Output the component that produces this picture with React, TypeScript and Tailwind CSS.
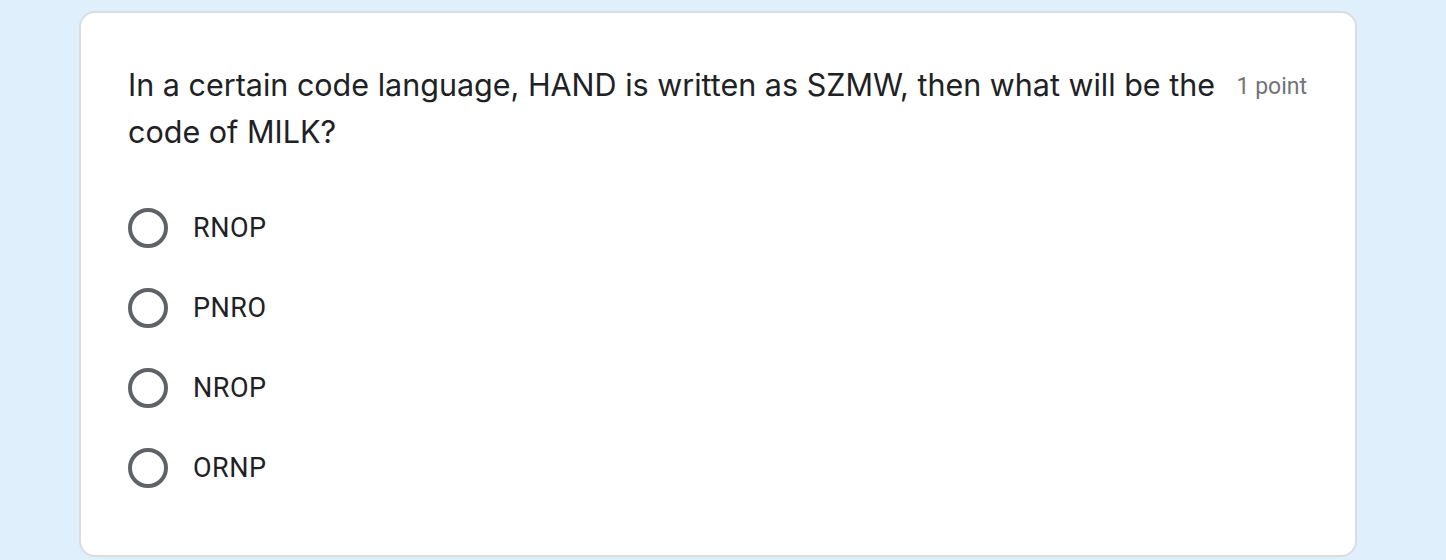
const options = ["RNOP", "PNRO", "NROP", "ORNP"];

export default function App() {
  return (
    <div className="min-h-[560px] w-full bg-[#e0effc] pl-[79px] pt-[11px]">
      <div className="h-[546px] w-[1278px] rounded-[16px] border-2 border-[#dadce0] bg-white pl-[47px] pr-[48px] pt-[48px]">
        <div className="flex items-start justify-between gap-4">
          <div
            className="flex-1 text-[30.5px] leading-[47px] text-[#202124]"
            style={{ fontFamily: "Inter, 'Open Sans', sans-serif" }}
          >
            In a certain code language, HAND is written as SZMW, then what will be the code of MILK?
          </div>
          <div
            className="pt-[8px] text-[23px] leading-[36px] text-[#70757a] whitespace-nowrap"
            style={{ fontFamily: "Roboto, sans-serif" }}
          >
            1 point
          </div>
        </div>
        <div className="mt-[33px] flex flex-col">
          {options.map((o) => (
            <div key={o} className="flex h-[80px] items-center gap-[25px]">
              <div className="h-[40px] w-[40px] rounded-full border-[4px] border-[#5f6368]" />
              <span
                className="text-[27px] tracking-[0.5px] text-[#202124]"
                style={{ fontFamily: "Roboto, sans-serif" }}
              >
                {o}
              </span>
            </div>
          ))}
        </div>
      </div>
    </div>
  );
}
